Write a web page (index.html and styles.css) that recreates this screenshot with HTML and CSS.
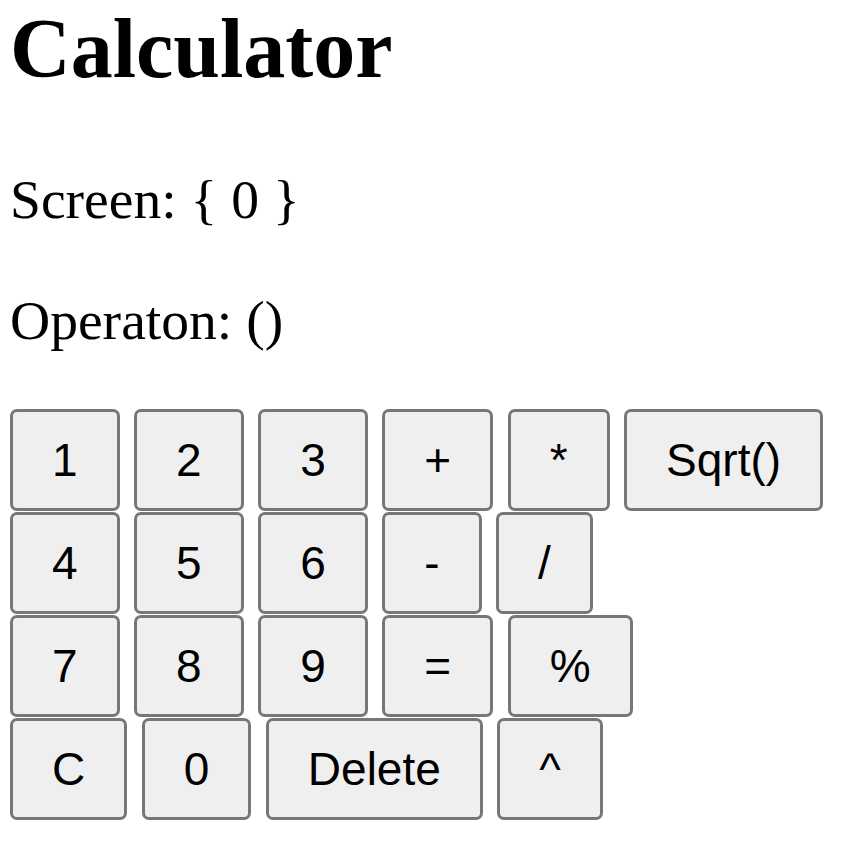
FILE: index.html
```html
<!DOCTYPE html>
<html>
<head>
<meta charset="utf-8">
<title>Calculator</title>
<link rel="stylesheet" href="styles.css">
</head>
<body>
<div class="page">
  <h1 class="title">Calculator</h1>
  <p class="screen">Screen: { 0 }</p>
  <p class="operation">Operaton: ()</p>
  <div class="keypad">
    <div class="row">
      <button class="key">1</button>
      <button class="key">2</button>
      <button class="key">3</button>
      <button class="key">+</button>
      <button class="key">*</button>
      <button class="key">Sqrt()</button>
    </div>
    <div class="row">
      <button class="key">4</button>
      <button class="key">5</button>
      <button class="key">6</button>
      <button class="key">-</button>
      <button class="key">/</button>
    </div>
    <div class="row">
      <button class="key">7</button>
      <button class="key">8</button>
      <button class="key">9</button>
      <button class="key">=</button>
      <button class="key">%</button>
    </div>
    <div class="row">
      <button class="key">C</button>
      <button class="key">0</button>
      <button class="key">Delete</button>
      <button class="key">^</button>
    </div>
  </div>
</div>
</body>
</html>
```

FILE: styles.css
```css
html, body {
  margin: 0;
  padding: 0;
  background: #ffffff;
}

.page {
  padding: 0 10px;
  font-family: "Liberation Serif", "Times New Roman", serif;
  color: #000000;
}

.title {
  margin: 0 0 70px 0;
  padding-top: 0;
  font-size: 84px;
  line-height: 97px;
  font-weight: bold;
}

.screen,
.operation {
  margin: 0;
  font-size: 55.6px;
  line-height: 64px;
}

.screen {
  margin-bottom: 56.5px;
}

.operation {
  margin-bottom: 57px;
}

.keypad {
  display: flex;
  flex-direction: column;
  gap: 1px;
}

.row {
  display: flex;
  gap: 14.5px;
}

.key {
  box-sizing: border-box;
  height: 102px;
  margin: 0;
  padding: 22px 39px;
  font-family: "Liberation Sans", Arial, sans-serif;
  font-size: 46px;
  line-height: 52px;
  color: #000000;
  background: #efefef;
  border: 3px solid #777777;
  border-radius: 7px;
  white-space: nowrap;
}
```
